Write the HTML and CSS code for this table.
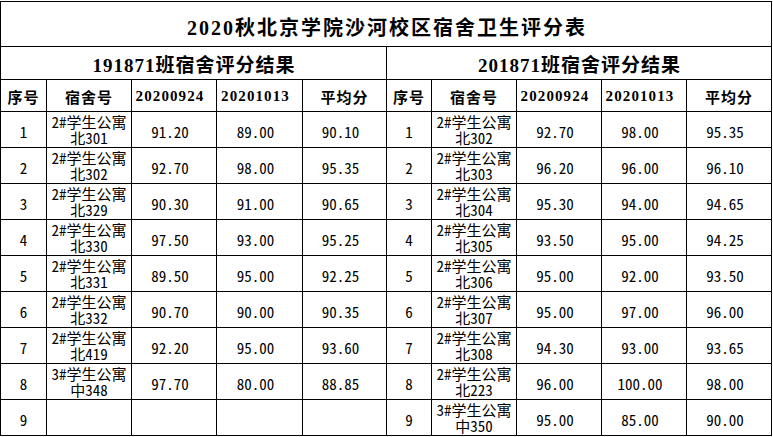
FILE: index.html
```html
<!DOCTYPE html>
<html lang="zh-CN">
<head>
<meta charset="utf-8">
<title>2020秋北京学院沙河校区宿舍卫生评分表</title>
<link rel="stylesheet" href="styles.css">
</head>
<body>
<div class="sheet">
  <div class="cell title">2020秋北京学院沙河校区宿舍卫生评分表</div>
  <div class="cell sub">191871班宿舍评分结果</div>
  <div class="cell sub">201871班宿舍评分结果</div>

  <div class="cell head">序号</div>
  <div class="cell head">宿舍号</div>
  <div class="cell head date">20200924</div>
  <div class="cell head date">20201013</div>
  <div class="cell head">平均分</div>
  <div class="cell head">序号</div>
  <div class="cell head">宿舍号</div>
  <div class="cell head date">20200924</div>
  <div class="cell head date">20201013</div>
  <div class="cell head">平均分</div>

  <div class="cell idx">1</div><div class="room">2#学生公寓<br>北301</div><div class="cell num">91.20</div><div class="cell num">89.00</div><div class="cell num">90.10</div>
  <div class="cell idx">1</div><div class="room">2#学生公寓<br>北302</div><div class="cell num">92.70</div><div class="cell num">98.00</div><div class="cell num">95.35</div>

  <div class="cell idx">2</div><div class="room">2#学生公寓<br>北302</div><div class="cell num">92.70</div><div class="cell num">98.00</div><div class="cell num">95.35</div>
  <div class="cell idx">2</div><div class="room">2#学生公寓<br>北303</div><div class="cell num">96.20</div><div class="cell num">96.00</div><div class="cell num">96.10</div>

  <div class="cell idx">3</div><div class="room">2#学生公寓<br>北329</div><div class="cell num">90.30</div><div class="cell num">91.00</div><div class="cell num">90.65</div>
  <div class="cell idx">3</div><div class="room">2#学生公寓<br>北304</div><div class="cell num">95.30</div><div class="cell num">94.00</div><div class="cell num">94.65</div>

  <div class="cell idx">4</div><div class="room">2#学生公寓<br>北330</div><div class="cell num">97.50</div><div class="cell num">93.00</div><div class="cell num">95.25</div>
  <div class="cell idx">4</div><div class="room">2#学生公寓<br>北305</div><div class="cell num">93.50</div><div class="cell num">95.00</div><div class="cell num">94.25</div>

  <div class="cell idx">5</div><div class="room">2#学生公寓<br>北331</div><div class="cell num">89.50</div><div class="cell num">95.00</div><div class="cell num">92.25</div>
  <div class="cell idx">5</div><div class="room">2#学生公寓<br>北306</div><div class="cell num">95.00</div><div class="cell num">92.00</div><div class="cell num">93.50</div>

  <div class="cell idx">6</div><div class="room">2#学生公寓<br>北332</div><div class="cell num">90.70</div><div class="cell num">90.00</div><div class="cell num">90.35</div>
  <div class="cell idx">6</div><div class="room">2#学生公寓<br>北307</div><div class="cell num">95.00</div><div class="cell num">97.00</div><div class="cell num">96.00</div>

  <div class="cell idx">7</div><div class="room">2#学生公寓<br>北419</div><div class="cell num">92.20</div><div class="cell num">95.00</div><div class="cell num">93.60</div>
  <div class="cell idx">7</div><div class="room">2#学生公寓<br>北308</div><div class="cell num">94.30</div><div class="cell num">93.00</div><div class="cell num">93.65</div>

  <div class="cell idx">8</div><div class="room">3#学生公寓<br>中348</div><div class="cell num">97.70</div><div class="cell num">80.00</div><div class="cell num">88.85</div>
  <div class="cell idx">8</div><div class="room">2#学生公寓<br>北223</div><div class="cell num">96.00</div><div class="cell num">100.00</div><div class="cell num">98.00</div>

  <div class="cell idx">9</div><div class="room"></div><div class="cell num"></div><div class="cell num"></div><div class="cell num"></div>
  <div class="cell idx">9</div><div class="room">3#学生公寓<br>中350</div><div class="cell num">95.00</div><div class="cell num">85.00</div><div class="cell num">90.00</div>
</div>
</body>
</html>
```

FILE: styles.css
```css
html, body {
  margin: 0;
  padding: 0;
  background: #fff;
}

body {
  padding-top: 1px;
}

.sheet {
  display: grid;
  grid-template-columns: 45px 84px 84px 85px 83px 44px 84px 84px 84px 84px;
  grid-template-rows: 44px 32px 31px repeat(9, 35px);
  gap: 1px;
  padding: 1px;
  width: max-content;
  background: #000;
  color: #000;
}

.cell {
  background: #fff;
  display: flex;
  align-items: center;
  justify-content: center;
  text-align: center;
  box-sizing: border-box;
  min-width: 0;
  min-height: 0;
}

.title {
  grid-column: 1 / -1;
  font-family: "Liberation Serif", "Noto Sans CJK SC", serif;
  font-weight: bold;
  font-size: 20px;
  letter-spacing: 2px;
  padding-top: 4px;
  padding-left: 2px;
}

.sub {
  grid-column: span 5;
  font-family: "Liberation Serif", "Noto Sans CJK SC", serif;
  font-weight: bold;
  font-size: 19px;
  letter-spacing: 1px;
  padding-top: 1px;
  padding-left: 1px;
}

.head {
  font-family: "Liberation Serif", "Noto Sans CJK SC", serif;
  font-weight: bold;
  font-size: 15px;
  letter-spacing: 1px;
  padding-top: 1px;
}

.head.date {
  letter-spacing: 1.1px;
  padding-right: 8px;
}

.idx, .room, .num {
  font-family: "Noto Sans Mono CJK SC", "Noto Sans CJK SC", monospace;
  font-size: 15px;
  line-height: 15px;
  padding-top: 4px;
}

.room {
  display: block;
  background: #fff;
  text-align: center;
  box-sizing: border-box;
  padding: 2px 0 0;
  line-height: 16px;
  white-space: nowrap;
}

.num {
  padding-right: 8px;
}
```
